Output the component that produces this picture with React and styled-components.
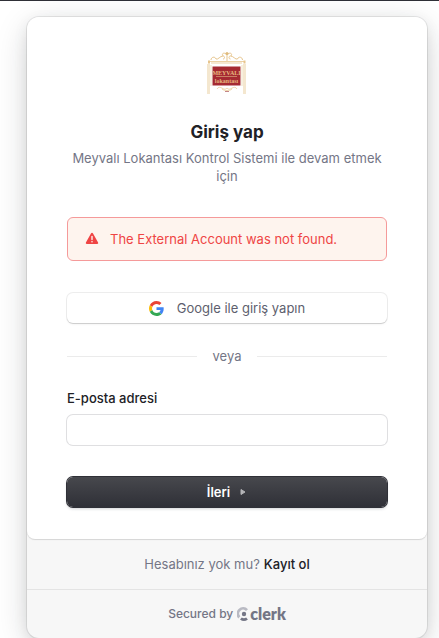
import React from "react";
import styled, { createGlobalStyle } from "styled-components";

const GlobalStyle = createGlobalStyle`
  *, *::before, *::after { box-sizing: border-box; }
  body {
    margin: 0;
    background: #fff;
    font-family: Inter, "Liberation Sans", sans-serif;
    font-size: 13px;
    line-height: 18px;
    color: #212126;
    overflow: hidden;
  }
  button, input { font: inherit; }
`;

const Page = styled.div`
  border-top: 1px solid #2f3037;
  padding: 16px 12px 0 27px;
`;

const Card = styled.main`
  max-width: 400px;
  border-radius: 12px;
  background: #f7f7f7;
  box-shadow: 0 5px 15px rgba(0, 0, 0, 0.08),
    0 8px 35px -3px rgba(25, 28, 33, 0.2),
    0 0 0 1px rgba(0, 0, 0, 0.08);
`;

const Panel = styled.section`
  display: flex;
  flex-direction: column;
  gap: 32px;
  padding: 32px 40px;
  background: #fff;
  border-radius: 12px 12px 8px 8px;
  box-shadow: 0 1px 1px rgba(0, 0, 0, 0.14);
`;

const Header = styled.header`
  display: flex;
  flex-direction: column;
  align-items: center;
  text-align: center;
`;

const Logo = styled.svg`
  width: 48px;
  height: 48px;
  margin-bottom: 23px;
`;

const Title = styled.h1`
  margin: 0 0 5px;
  font-size: 17px;
  line-height: 24px;
  font-weight: 700;
`;

const Subtitle = styled.p`
  margin: 0;
  color: #747686;
`;

const Alert = styled.div`
  display: flex;
  align-items: center;
  gap: 11px;
  height: 44px;
  padding: 0 17px;
  border: 1px solid #f59a9a;
  border-radius: 6px;
  background: #fef4ee;
  color: #ef4444;
`;

const AlertIcon = styled.svg`
  width: 14px;
  height: 14px;
`;

const Form = styled.form`
  display: flex;
  flex-direction: column;
  gap: 24px;
`;

const Button = styled.button`
  display: flex;
  align-items: center;
  justify-content: center;
  width: 100%;
  height: 30px;
  border: 0;
  border-radius: 6px;
  cursor: pointer;
`;

const SocialButton = styled(Button)`
  gap: 13px;
  background: #fff;
  color: #5e5f6e;
  box-shadow: 0 0 0 1px rgba(0, 0, 0, 0.07),
    0 2px 3px -1px rgba(0, 0, 0, 0.08),
    0 1px 0 rgba(0, 0, 0, 0.08);
`;

const SocialIcon = styled.svg`
  width: 15px;
  height: 15px;
`;

const SubmitButton = styled(Button)`
  gap: 9px;
  margin-top: 8px;
  color: #fff;
  font-weight: 600;
  background: linear-gradient(#47484d, #2f3037);
  box-shadow: 0 0 0 1px #2f3037, 0 2px 3px rgba(34, 42, 53, 0.2);
`;

const Arrow = styled.svg`
  width: 8px;
  height: 8px;
`;

const Divider = styled.div`
  display: flex;
  align-items: center;
  gap: 16px;
  color: #747686;

  &::before,
  &::after {
    content: "";
    flex: 1;
    height: 1px;
    background: #ebebeb;
  }
`;

const Field = styled.div`
  display: flex;
  flex-direction: column;
  gap: 8px;
`;

const Label = styled.label`
  font-weight: 500;
`;

const Input = styled.input`
  width: 100%;
  height: 30px;
  padding: 0 12px;
  border: 0;
  border-radius: 6px;
  outline: none;
  background: #fff;
  box-shadow: 0 0 0 1px #dfdfe1, 0 1px 1px rgba(0, 0, 0, 0.03);
`;

const FooterRow = styled.footer`
  display: flex;
  align-items: center;
  justify-content: center;
  gap: 4px;
  height: 50px;
  color: #747686;

  & + & {
    height: 49px;
    border-top: 1px solid #e4e4e4;
  }
`;

const SignUpLink = styled.a`
  color: #212126;
  font-weight: 500;
  text-decoration: none;
`;

const Secured = styled.span`
  font-size: 12px;
  font-weight: 500;
`;

const Brand = styled.a`
  display: flex;
  align-items: center;
  gap: 1px;
  color: #747686;
  font-family: Lato, sans-serif;
  font-size: 16px;
  font-weight: 800;
  text-decoration: none;
`;

const BrandMark = styled.svg`
  width: 12px;
  height: 14px;
`;

const RestaurantLogo = () => (
  <Logo viewBox="0 0 48 48" role="img" aria-label="Meyvalı Lokantası">
    <g fill="none" stroke="#e7c58d" strokeWidth="1">
      <path d="M5 12.5h37M8 14h31" strokeWidth=".8" />
      <path d="M6 11.5v3M41.500 11.500v3" strokeWidth="2" />
      <path d="M8 11c0-3 4-4 5-1 2 1 4-3 7-3 2 0 2 3 0 3M39.500 11c0-3-4-4-5-1-2 1-4-3-7-3-2 0-2 3 0 3" />
      <path d="M20 7c-2-3 2-4 4-1 2-3 6-2 4 1M24 4v8" />
      <path d="M14 40c3-5 7 3 10-1 3 4 7-4 10 1M19 40c2 2 8 2 10 0" strokeWidth=".7" />
    </g>
    <g fill="#f0dfbf">
      <path d="M4 15h3v30H4zM40 15h3v30h-3z" opacity=".75" />
      <path d="M7.500 16h1v21h-1zM38.500 16h1v21h-1z" />
    </g>
    <circle cx="24" cy="4.500" r="1.500" fill="#dfbb7e" />
    <path d="M9.500 17.500h28v19h-28z" fill="#a52a32" />
    <path d="M13 27.500h21" stroke="#c98063" strokeWidth="1" />
    <path d="M22 42.500h4" stroke="#c48587" strokeWidth="1" />
    <g fill="#e7b77f" textAnchor="middle" fontFamily="Liberation Serif, serif" fontWeight="700">
      <text x="23.500" y="26" fontSize="6">MEYVALI</text>
      <text x="23.500" y="34" fontSize="6">lokantası</text>
    </g>
  </Logo>
);

const GoogleIcon = () => (
  <SocialIcon viewBox="0 0 48 48" aria-hidden="true">
    <path fill="#EA4335" d="M24 9.5c3.54 0 6.71 1.22 9.21 3.6l6.85-6.85C35.9 2.38 30.47 0 24 0 14.62 0 6.51 5.38 2.56 13.22l7.98 6.19C12.43 13.72 17.74 9.5 24 9.5z" />
    <path fill="#4285F4" d="M46.98 24.55c0-1.57-.15-3.09-.38-4.55H24v9.02h12.94c-.58 2.96-2.26 5.48-4.78 7.18l7.73 6c4.51-4.18 7.09-10.36 7.09-17.65z" />
    <path fill="#FBBC05" d="M10.53 28.59c-.48-1.45-.76-2.99-.76-4.59s.27-3.14.76-4.59l-7.98-6.19C.92 16.46 0 20.12 0 24c0 3.88.92 7.54 2.56 10.78l7.97-6.19z" />
    <path fill="#34A853" d="M24 48c6.48 0 11.93-2.13 15.89-5.81l-7.73-6c-2.15 1.45-4.92 2.3-8.16 2.3-6.26 0-11.57-4.22-13.47-9.91l-7.98 6.19C6.51 42.62 14.62 48 24 48z" />
  </SocialIcon>
);

export default function App() {
  return (
    <>
      <GlobalStyle />
      <Page>
        <Card>
          <Panel>
            <Header>
              <RestaurantLogo />
              <Title>Giriş yap</Title>
              <Subtitle>Meyvalı Lokantası Kontrol Sistemi ile devam etmek için</Subtitle>
            </Header>
            <Alert role="alert">
              <AlertIcon viewBox="0 0 14 14" aria-hidden="true">
                <path d="M6.1 1.2a1 1 0 0 1 1.8 0l5.2 9.4a1 1 0 0 1-.9 1.4H1.8a1 1 0 0 1-.9-1.400z" fill="#ef4444" />
                <path d="M7 4.500v3" stroke="#fef4ee" strokeWidth="1.4" strokeLinecap="round" />
                <circle cx="7" cy="9.8" r=".8" fill="#fef4ee" />
              </AlertIcon>
              <span>The External Account was not found.</span>
            </Alert>
            <Form onSubmit={(event) => event.preventDefault()}>
              <SocialButton type="button">
                <GoogleIcon />
                Google ile giriş yapın
              </SocialButton>
              <Divider>veya</Divider>
              <Field>
                <Label htmlFor="email">E-posta adresi</Label>
                <Input id="email" type="email" autoComplete="email" />
              </Field>
              <SubmitButton type="submit">
                İleri
                <Arrow viewBox="0 0 8 8" aria-hidden="true">
                  <path d="M2 1.5v5L6 4z" fill="#b4b4b7" stroke="#b4b4b7" strokeLinejoin="round" />
                </Arrow>
              </SubmitButton>
            </Form>
          </Panel>
          <FooterRow>
            Hesabınız yok mu? <SignUpLink href="#sign-up">Kayıt ol</SignUpLink>
          </FooterRow>
          <FooterRow>
            <Secured>Secured by</Secured>
            <Brand href="#clerk">
              <BrandMark viewBox="0 0 12 14" aria-hidden="true">
                <path d="M11 2.2 9 4.100A3.800 3.800 0 0 0 3.300 9.2L1.300 11.4A6.5 6.5 0 0 1 11 2.2z" fill="#b9bac3" />
                <circle cx="7" cy="7" r="2.2" fill="#747686" />
                <path d="M3 12.4 4.8 10.5a4 4 0 0 0 4.3 0l1.8 1.9a6.5 6.5 0 0 1-7.9 0z" fill="#747686" />
              </BrandMark>
              clerk
            </Brand>
          </FooterRow>
        </Card>
      </Page>
    </>
  );
}
